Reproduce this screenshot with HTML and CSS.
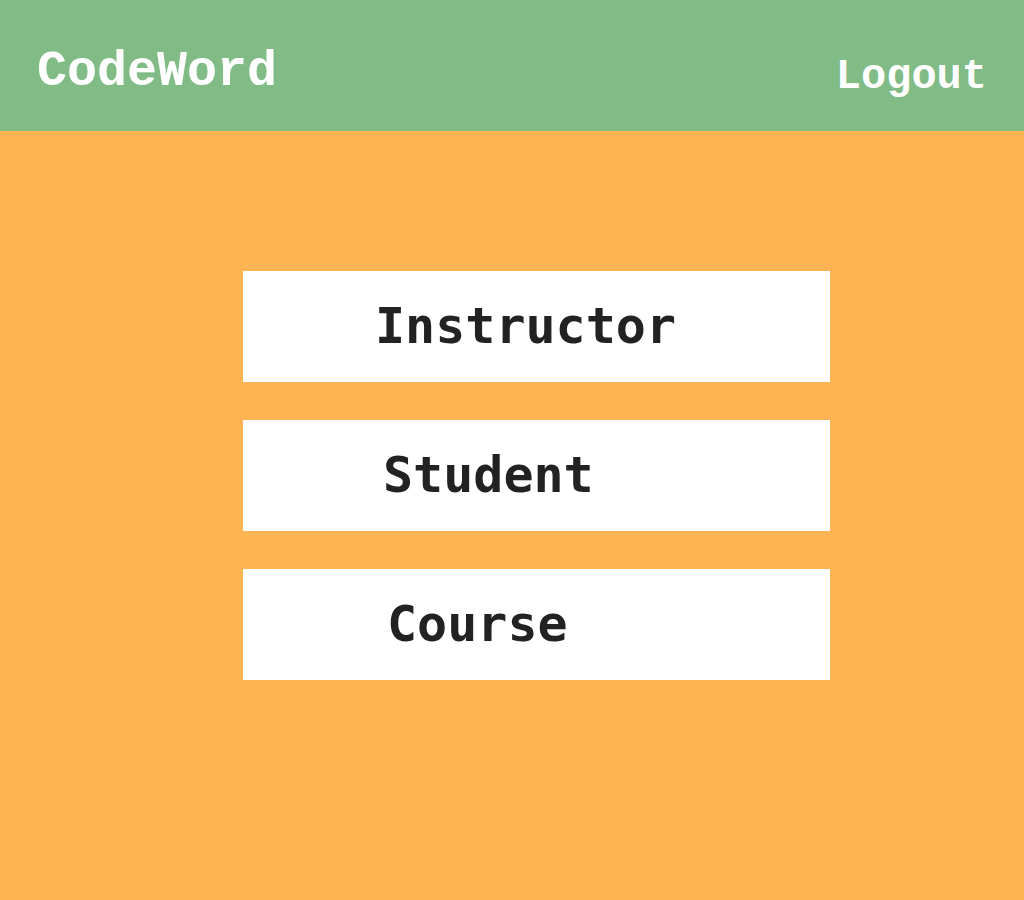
FILE: index.html
```html
<!DOCTYPE html>
<html>
<head>
<meta charset="utf-8">
<link rel="stylesheet" href="styles.css">
</head>
<body>
<header class="topbar">
  <div class="brand">CodeWord</div>
  <a class="logout" href="#">Logout</a>
</header>
<main class="content">
  <a class="tile tile-instructor" href="#">Instructor</a>
  <a class="tile tile-student" href="#">Student</a>
  <a class="tile tile-course" href="#">Course</a>
</main>
</body>
</html>
```
FILE: styles.css
```css
html, body {
  margin: 0;
  padding: 0;
  height: 100%;
}
body {
  background: #feb453;
  font-family: "DejaVu Sans Mono", "Liberation Mono", monospace;
  font-weight: bold;
}
.topbar {
  height: 131px;
  background: #81bb86;
  display: flex;
  align-items: flex-start;
  justify-content: space-between;
  padding: 0 37px;
  box-sizing: border-box;
  font-family: "Liberation Mono", "DejaVu Sans Mono", monospace;
}
.brand {
  color: #fff;
  font-size: 50px;
  margin-top: 43px;
}
.logout {
  color: #fff;
  text-decoration: none;
  font-size: 42px;
  margin-top: 53px;
}
.content {
  display: flex;
  flex-direction: column;
  align-items: flex-start;
  padding: 140px 0 0 243px;
  gap: 38px;
}
.tile {
  display: flex;
  align-items: center;
  width: 587px;
  height: 111px;
  box-sizing: border-box;
  background: #fff;
  color: #222;
  text-decoration: none;
  font-size: 50px;
  padding-bottom: 2px;
}
.tile-instructor { padding-left: 132px; }
.tile-student { padding-left: 140px; }
.tile-course { padding-left: 144px; }
```
